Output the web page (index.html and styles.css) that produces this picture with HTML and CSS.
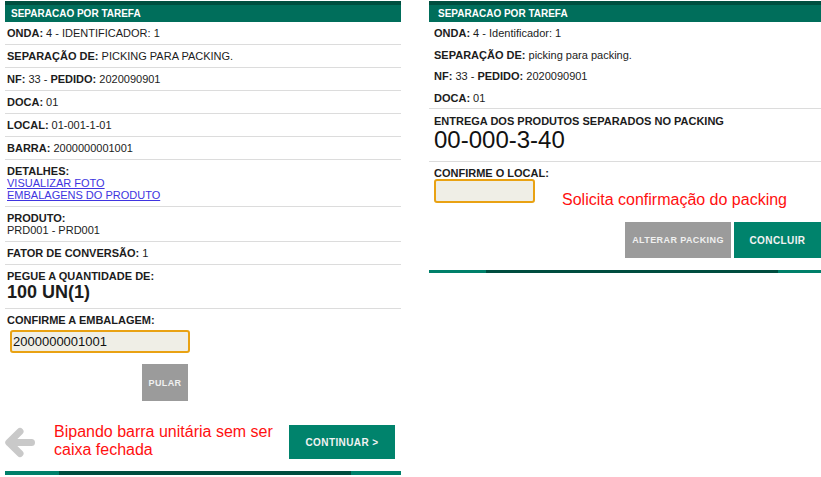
FILE: index.html
```html
<!DOCTYPE html>
<html lang="pt-BR">
<head>
    <meta charset="UTF-8">
    <meta name="viewport" content="width=device-width, initial-scale=1.0">
    <title>Separacao por Tarefa</title>
    <link rel="stylesheet" href="styles.css">
</head>
<body>
    <div class="screens">

        <!-- Tela 1: conferencia da embalagem -->
        <section class="panel panel-left">
            <div class="panel-head">SEPARACAO POR TAREFA</div>
            <div class="row"><b>ONDA:</b> 4 - IDENTIFICADOR: 1</div>
            <div class="row"><b>SEPARAÇÃO DE:</b> PICKING PARA PACKING.</div>
            <div class="row"><b>NF:</b> 33 - <b>PEDIDO:</b> 2020090901</div>
            <div class="row"><b>DOCA:</b> 01</div>
            <div class="row"><b>LOCAL:</b> 01-001-1-01</div>
            <div class="row"><b>BARRA:</b> 2000000001001</div>
            <div class="row">
                <b>DETALHES:</b><br>
                <a href="#">VISUALIZAR FOTO</a><br>
                <a href="#">EMBALAGENS DO PRODUTO</a>
            </div>
            <div class="row"><b>PRODUTO:</b><br>PRD001 - PRD001</div>
            <div class="row"><b>FATOR DE CONVERSÃO:</b> 1</div>
            <div class="row">
                <b>PEGUE A QUANTIDADE DE:</b>
                <div class="qty">100 UN(1)</div>
            </div>
            <div class="row row-plain">
                <b>CONFIRME A EMBALAGEM:</b>
                <input type="text" class="field field-wide" value="2000000001001">
            </div>

            <div class="skip">
                <button class="btn btn-grey btn-skip">PULAR</button>
            </div>

            <div class="footer-row">
                <svg class="back" width="30" height="31" viewBox="0 0 30 31">
                    <path d="M26.5 15.5 H4 M15 4.5 L3.8 15.5 L15 26.5" fill="none" stroke="#c9c9c9" stroke-width="7" stroke-linecap="round" stroke-linejoin="round"/>
                </svg>
                <p class="note note-left">Bipando barra unitária sem ser caixa fechada</p>
                <button class="btn btn-green btn-next">CONTINUAR &gt;</button>
            </div>

            <div class="bar"></div>
        </section>

        <!-- Tela 2: entrega no packing -->
        <section class="panel panel-right">
            <div class="panel-head">SEPARACAO POR TAREFA</div>
            <div class="line"><b>ONDA:</b> 4 - Identificador: 1</div>
            <div class="line"><b>SEPARAÇÃO DE:</b> picking para packing.</div>
            <div class="line"><b>NF:</b> 33 - <b>PEDIDO:</b> 2020090901</div>
            <div class="line"><b>DOCA:</b> 01</div>

            <div class="delivery">
                <b>ENTREGA DOS PRODUTOS SEPARADOS NO PACKING</b>
                <div class="location">00-000-3-40</div>
            </div>

            <div class="confirm">
                <b>CONFIRME O LOCAL:</b>
                <div class="confirm-row">
                    <input type="text" class="field field-short" value="">
                    <p class="note note-right">Solicita confirmação do packing</p>
                </div>
            </div>

            <div class="actions">
                <button class="btn btn-grey btn-change">ALTERAR PACKING</button>
                <button class="btn btn-green btn-done">CONCLUIR</button>
            </div>

            <div class="bar"></div>
        </section>

    </div>
</body>
</html>
```

FILE: styles.css
```css
body {
    margin: 0;
    font-family: "Liberation Sans", Arial, sans-serif;
    font-size: 11px;
    color: #1c1c1c;
    background-color: #ffffff;
}
.screens {
    display: flex;
    align-items: flex-start;
    padding-top: 1px;
}
.panel {
    display: flex;
    flex-direction: column;
    border-top: 4px solid #004f40;
}
.panel-left {
    width: 396px;
    margin-left: 5px;
}
.panel-right {
    width: 392px;
    margin-left: 28px;
}
.panel-head {
    height: 17px;
    line-height: 17px;
    padding-left: 6px;
    background-color: #006e5b;
    color: #ffffff;
    font-size: 10px;
    font-weight: bold;
}
.panel-right .panel-head {
    padding-left: 9px;
}

/* linhas da tela 1 */
.row {
    padding: 5px 2px;
    line-height: 12px;
    border-bottom: 1px solid #dcdcdc;
}
.row-plain {
    border-bottom: none;
    padding-bottom: 0;
}
.row a {
    color: #4034e0;
}
.qty {
    font-size: 18px;
    font-weight: bold;
    line-height: 21px;
}
.field {
    display: block;
    box-sizing: border-box;
    height: 23px;
    margin-top: 4px;
    padding: 0 1px;
    border: 2px solid #e9a213;
    border-radius: 3px;
    background-color: #efeee6;
    font-family: "Liberation Sans", Arial, sans-serif;
    font-size: 13px;
    color: #111;
    outline: none;
}
.field-wide {
    width: 180px;
    margin-left: 3px;
}
.skip {
    display: flex;
    margin-top: 11px;
    padding-left: 137px;
}
.btn {
    border: none;
    border-radius: 0;
    cursor: pointer;
    font-family: "Liberation Sans", Arial, sans-serif;
    font-weight: bold;
    letter-spacing: 0.4px;
    padding: 0;
}
.btn-grey {
    background-color: #9b9b9b;
    color: #f0f0f0;
    font-size: 9px;
}
.btn-green {
    background-color: #00836c;
    color: #f2f2f2;
    font-size: 10px;
}
.btn-skip {
    width: 46px;
    height: 37px;
}
.footer-row {
    display: flex;
    align-items: center;
    margin-top: 24px;
    height: 34px;
}
.back {
    flex: none;
}
.note {
    margin: 0;
    color: #ff1010;
    font-size: 16px;
    line-height: 18px;
}
.note-left {
    width: 225px;
    margin-left: 19px;
    margin-top: -3px;
}
.btn-next {
    width: 106px;
    height: 34px;
    margin-left: auto;
    margin-right: 6px;
}
.bar {
    height: 4px;
    margin-top: 12px;
    background: linear-gradient(to right, #00806a 0, #00806a 54px, #004d3f 54px, #004d3f 346px, #00806a 346px);
}

/* tela 2 */
.line {
    padding: 5px 5px 4.5px;
    line-height: 12px;
}
.delivery {
    padding: 6px 5px 8px;
    line-height: 12px;
    border-top: 1px solid #dcdcdc;
    border-bottom: 1px solid #dcdcdc;
}
.location {
    font-size: 24px;
    line-height: 26px;
    color: #111;
}
.confirm {
    padding: 5px 5px 0;
    line-height: 12px;
}
.confirm-row {
    display: flex;
    align-items: flex-start;
}
.field-short {
    width: 101px;
    height: 24px;
    margin-top: 0;
}
.note-right {
    margin-left: 27px;
    margin-top: 12px;
}
.actions {
    display: flex;
    justify-content: flex-end;
    gap: 3px;
    margin-top: 13px;
}
.btn-change {
    width: 106px;
    height: 36px;
}
.btn-done {
    width: 87px;
    height: 36px;
}
.panel-right .bar {
    height: 3px;
    background: linear-gradient(to right, #00806a 0, #00806a 57px, #004d3f 57px, #004d3f 349px, #00806a 349px);
}
```
